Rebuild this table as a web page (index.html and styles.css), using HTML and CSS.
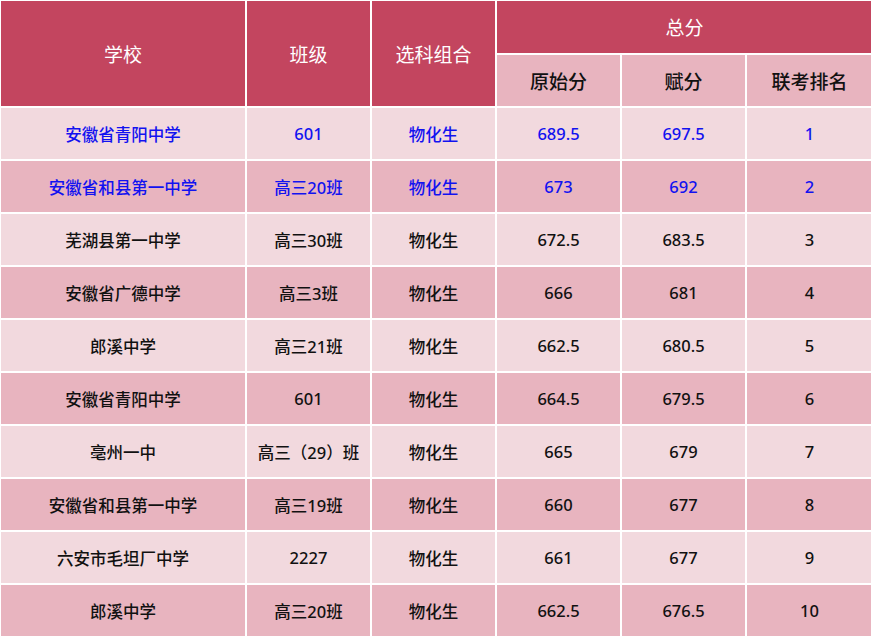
FILE: index.html
```html
<!DOCTYPE html>
<html lang="zh">
<head>
<meta charset="utf-8">
<link rel="stylesheet" href="styles.css">
</head>
<body>
<table class="score">
  <colgroup>
    <col class="c1"><col class="c2"><col class="c3"><col class="c4"><col class="c5"><col class="c6">
  </colgroup>
  <thead>
    <tr class="h1">
      <th rowspan="2">学校</th>
      <th rowspan="2">班级</th>
      <th rowspan="2">选科组合</th>
      <th colspan="3">总分</th>
    </tr>
    <tr class="h2">
      <th>原始分</th>
      <th>赋分</th>
      <th>联考排名</th>
    </tr>
  </thead>
  <tbody>
    <tr class="light blue"><td>安徽省青阳中学</td><td>601</td><td>物化生</td><td>689.5</td><td>697.5</td><td>1</td></tr>
    <tr class="dark blue"><td>安徽省和县第一中学</td><td>高三20班</td><td>物化生</td><td>673</td><td>692</td><td>2</td></tr>
    <tr class="light"><td>芜湖县第一中学</td><td>高三30班</td><td>物化生</td><td>672.5</td><td>683.5</td><td>3</td></tr>
    <tr class="dark"><td>安徽省广德中学</td><td>高三3班</td><td>物化生</td><td>666</td><td>681</td><td>4</td></tr>
    <tr class="light"><td>郎溪中学</td><td>高三21班</td><td>物化生</td><td>662.5</td><td>680.5</td><td>5</td></tr>
    <tr class="dark"><td>安徽省青阳中学</td><td>601</td><td>物化生</td><td>664.5</td><td>679.5</td><td>6</td></tr>
    <tr class="light"><td>亳州一中</td><td>高三（29）班</td><td>物化生</td><td>665</td><td>679</td><td>7</td></tr>
    <tr class="dark"><td>安徽省和县第一中学</td><td>高三19班</td><td>物化生</td><td>660</td><td>677</td><td>8</td></tr>
    <tr class="light"><td>六安市毛坦厂中学</td><td>2227</td><td>物化生</td><td>661</td><td>677</td><td>9</td></tr>
    <tr class="dark"><td>郎溪中学</td><td>高三20班</td><td>物化生</td><td>662.5</td><td>676.5</td><td>10</td></tr>
  </tbody>
</table>
</body>
</html>
```

FILE: styles.css
```css
html, body {
  margin: 0;
  padding: 0;
  background: #ffffff;
}

.score {
  width: 873px;
  margin: -1px 0 0 -1px;
  border-collapse: collapse;
  table-layout: fixed;
  font-family: "Noto Sans", "Noto Sans CJK SC", sans-serif;
  text-align: center;
}

.c1 { width: 246px; }
.c2 { width: 125px; }
.c3 { width: 125px; }
.c4 { width: 125px; }
.c5 { width: 125px; }
.c6 { width: 127px; }

.score th,
.score td {
  border: 2px solid #ffffff;
  padding: 0;
  text-align: center;
  vertical-align: middle;
}

.h1 th {
  background: #c3455f;
  color: #ffffff;
  font-weight: 400;
  font-size: 19px;
  height: 52px;
}

.h2 th {
  background: #e8b4bf;
  color: #111111;
  font-weight: 500;
  font-size: 19px;
  height: 51px;
}

.score td {
  height: 51px;
  font-size: 16.5px;
  font-weight: 500;
  color: #111111;
}

.light td { background: #f2d9de; }
.dark td { background: #e8b4bf; }
.blue td { color: #1212f0; }
```
